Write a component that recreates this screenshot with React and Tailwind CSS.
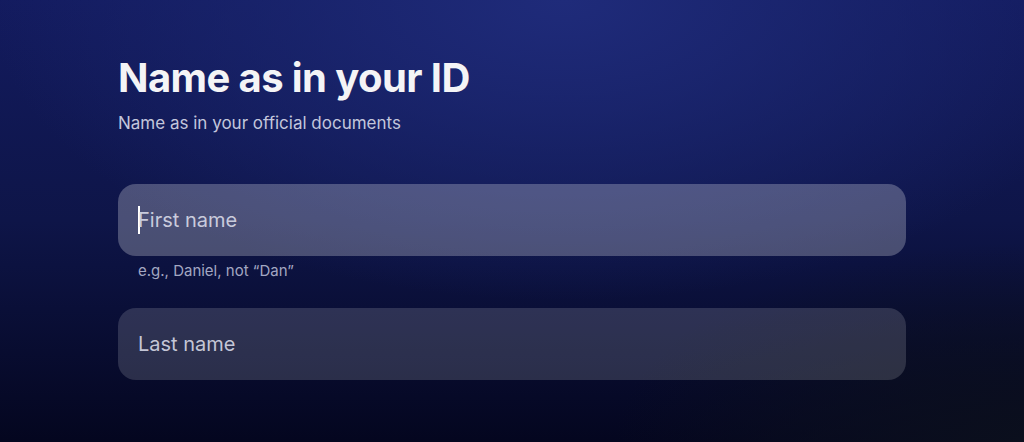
export default function App() {
    return (
        <div
            className="w-[1024px] h-[442px] overflow-hidden bg-[radial-gradient(ellipse_70%_85%_at_55%_0%,#1f2b7a_0%,rgba(28,40,115,0.6)_40%,transparent_80%),radial-gradient(ellipse_40%_45%_at_100%_100%,#0b0f1d_0%,rgba(11,15,29,0.5)_55%,transparent_100%),linear-gradient(180deg,#131b5f_0%,#0e1548_50%,#04061f_100%)]"
            style={{ fontFamily: 'Inter, "Noto Sans", sans-serif' }}
        >
            <div className="flex flex-col pl-[118px] pr-[118px] pt-[54px]">
                {/* Title */}
                <h1 className="text-[40px] leading-[48px] font-bold tracking-[-0.015em] text-[#f4f4f6]">Name as in your ID</h1>
                <p className="mt-[9px] text-[17px] leading-[24px] text-[#c3c6dc]">Name as in your official documents</p>

                {/* First name */}
                <div className="mt-[49px] flex h-[72px] items-center rounded-[18px] bg-white/25 px-[20px]">
                    <span className="mr-[-2px] h-[28px] w-[2px] bg-white" />
                    <span className="text-[20px] text-[#c9cbdc]">First name</span>
                </div>
                <p className="mt-[5px] pl-[20px] text-[15px] leading-[20px] text-[#a3a7c2]">e.g., Daniel, not “Dan”</p>

                {/* Last name */}
                <div className="mt-[27px] flex h-[72px] items-center rounded-[18px] bg-white/15 px-[20px]">
                    <span className="text-[20px] text-[#c4c6d6]">Last name</span>
                </div>
            </div>
        </div>
    );
}
